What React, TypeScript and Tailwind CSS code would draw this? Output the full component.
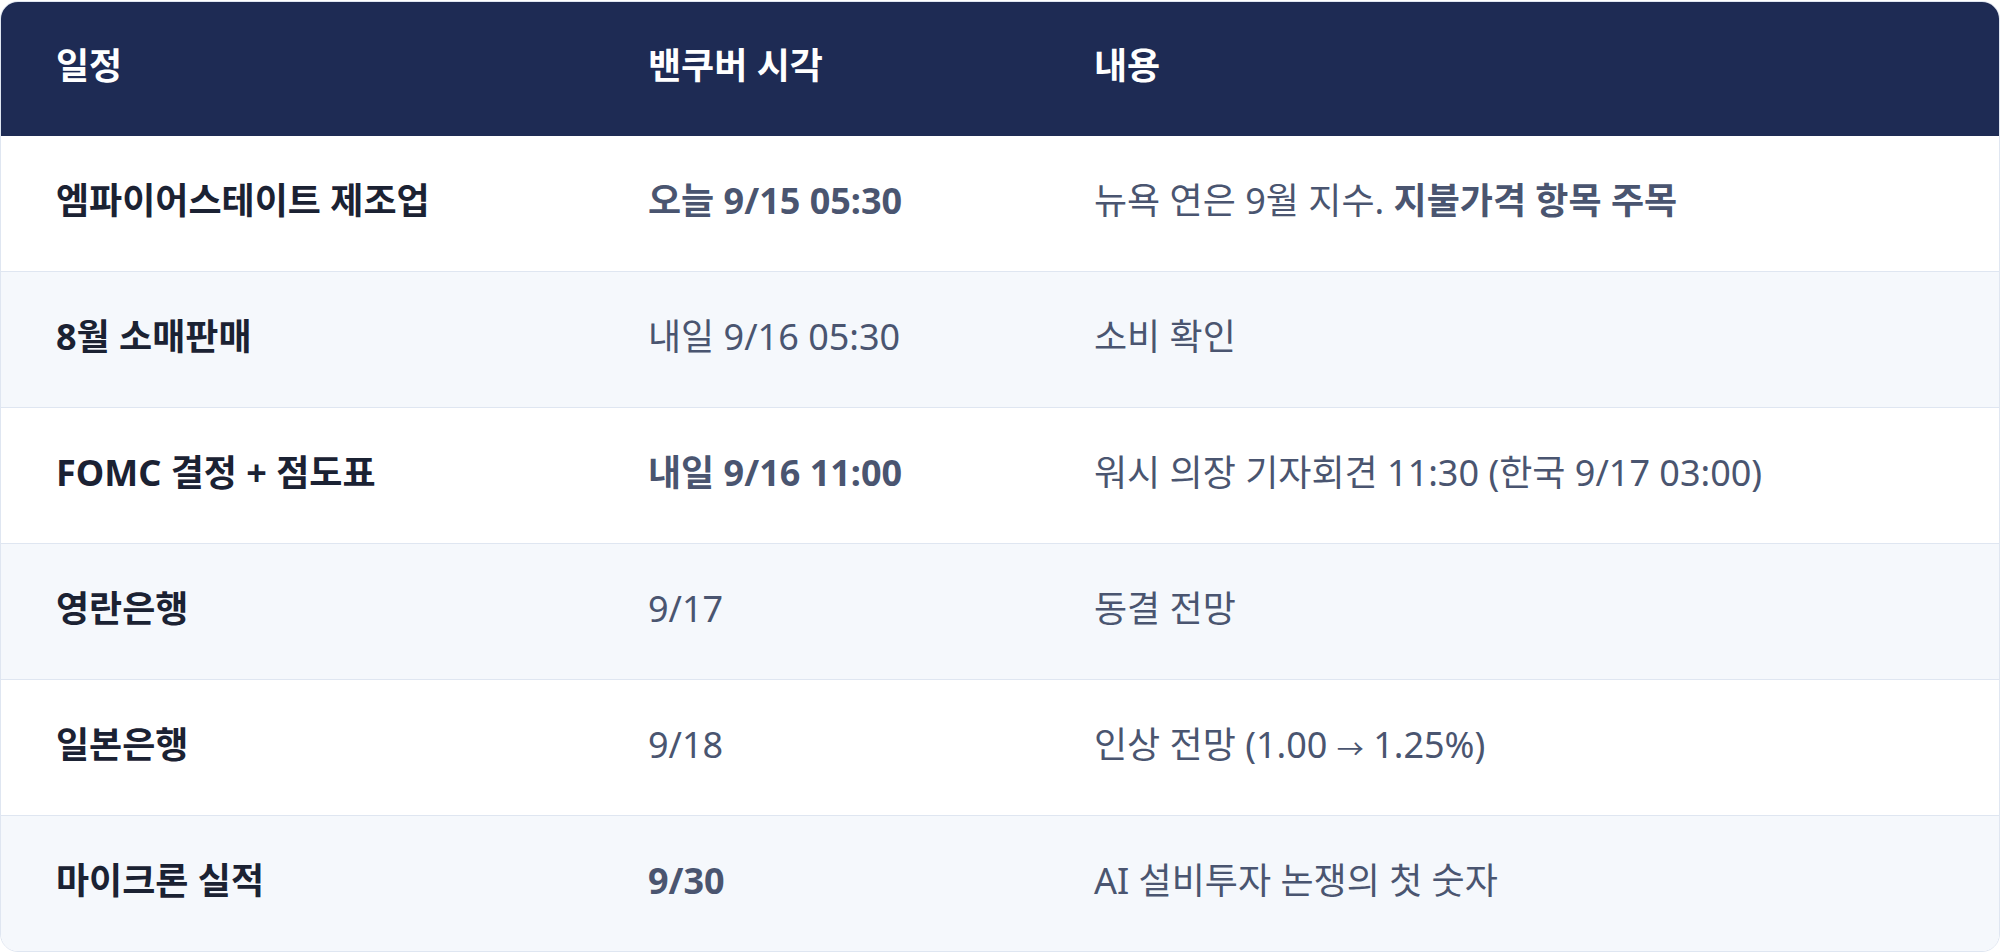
import React from 'react';

type Row = {
    title: string;
    time: string;
    timeBold?: boolean;
    note: React.ReactNode;
};

const rows: Row[] = [
    {
        title: '엠파이어스테이트 제조업',
        time: '오늘 9/15 05:30',
        timeBold: true,
        note: (
            <>
                뉴욕 연은 9월 지수. <b className="font-bold">지불가격 항목 주목</b>
            </>
        ),
    },
    { title: '8월 소매판매', time: '내일 9/16 05:30', note: '소비 확인' },
    {
        title: 'FOMC 결정 + 점도표',
        time: '내일 9/16 11:00',
        timeBold: true,
        note: '워시 의장 기자회견 11:30 (한국 9/17 03:00)',
    },
    { title: '영란은행', time: '9/17', note: '동결 전망' },
    {
        title: '일본은행',
        time: '9/18',
        note: (
            <>
                인상 전망 (1.00 <span className="align-middle text-[27px]">→</span> 1.25%)
            </>
        ),
    },
    { title: '마이크론 실적', time: '9/30', timeBold: true, note: 'AI 설비투자 논쟁의 첫 숫자' },
];

const App: React.FC = () => {
    return (
        <div className="min-h-screen bg-white font-['Noto_Sans','Noto_Sans_CJK_KR',sans-serif] text-[36px] leading-none">
            <div className="mt-px overflow-hidden rounded-[18px] border border-[#dfe6f1]">
                <div className="flex h-[134px] items-center bg-[#1e2b54] pb-[6px] font-bold text-white">
                    <div className="w-[591px] shrink-0 pl-[55px]">일정</div>
                    <div className="w-[446px] shrink-0 pl-[56px]">밴쿠버 시각</div>
                    <div className="flex-1 pl-[56px]">내용</div>
                </div>
                {rows.map((row, i) => (
                    <div
                        key={i}
                        className={`flex items-center pb-[6px] ${i === 0 ? 'h-[135px]' : 'h-[136px] border-t border-[#dfe6f1]'} ${i % 2 === 1 ? 'bg-[#f5f8fc]' : 'bg-white'}`}
                    >
                        <div className="w-[591px] shrink-0 pl-[55px] font-bold text-[#1b2233]">{row.title}</div>
                        <div className={`w-[446px] shrink-0 pl-[56px] text-[#4a5570] ${row.timeBold ? 'font-bold' : ''}`}>
                            {row.time}
                        </div>
                        <div className="flex-1 pl-[56px] text-[#4a5570]">{row.note}</div>
                    </div>
                ))}
            </div>
        </div>
    );
};

export default App;
